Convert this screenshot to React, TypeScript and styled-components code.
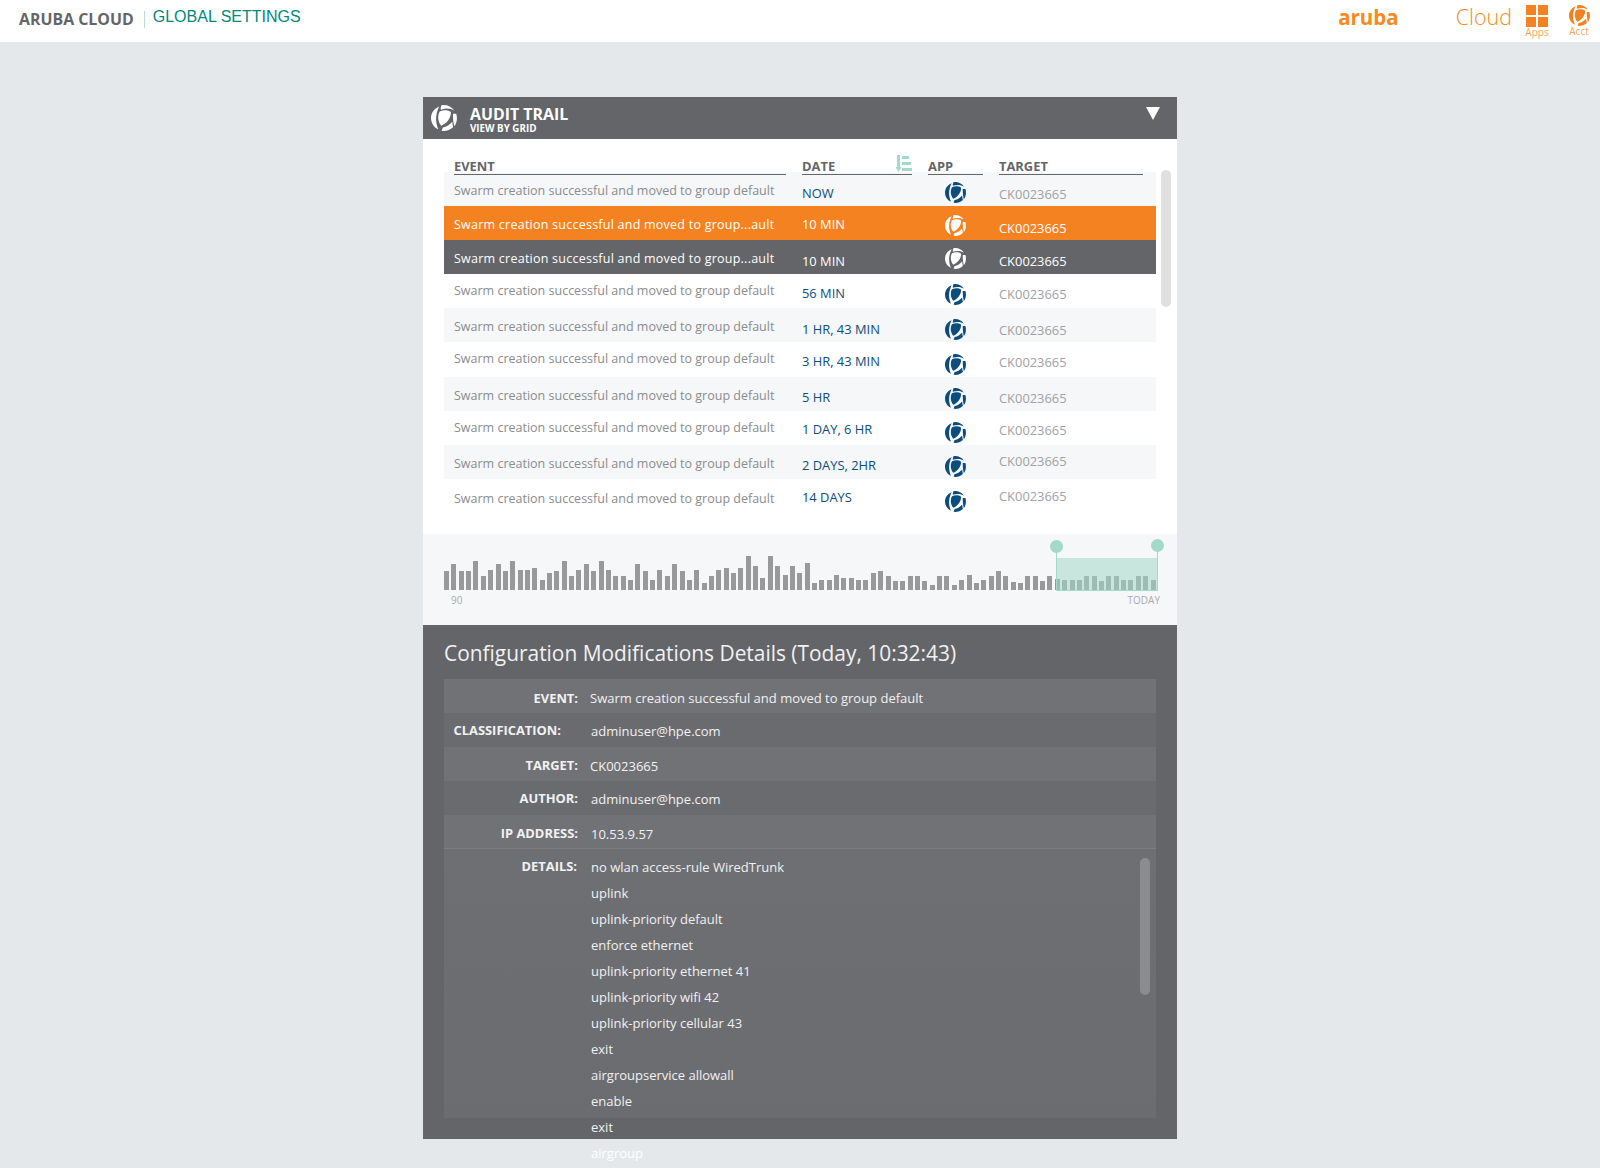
import React from 'react'
import styled, { createGlobalStyle } from 'styled-components'

const COLOR = {
  PAGE: '#e4e8eb',
  SLATE: '#646569',
  ORANGE: '#f58220',
  BLUE: '#0d4d7c',
  TEAL: '#a3d9c9',
}

const GlobalStyle = createGlobalStyle`
  html, body {
    margin: 0;
    background: ${COLOR.PAGE};
    font-family: "Open Sans", "Liberation Sans", sans-serif;
  }

  body, #root {
    min-height: 100vh;
  }
`

type RowKind = 'plain' | 'shade' | 'orange' | 'dark'

// top offsets inside a row: event, date, icon, target
const rows: { date: string; kind: RowKind; text?: string; tops: number[] }[] = [
  { date: 'NOW', kind: 'shade', tops: [10, 12, 10, 13] },
  { date: '10 MIN', kind: 'orange', text: 'Swarm creation successful and moved to group...ault', tops: [10, 9, 9, 13] },
  { date: '10 MIN', kind: 'dark', text: 'Swarm creation successful and moved to group...ault', tops: [10, 12, 8, 12] },
  { date: '56 MIN', kind: 'plain', tops: [8, 10, 10, 11] },
  { date: '1 HR, 43 MIN', kind: 'shade', tops: [10, 12, 11, 13] },
  { date: '3 HR, 43 MIN', kind: 'plain', tops: [8, 10, 12, 11] },
  { date: '5 HR', kind: 'shade', tops: [10, 11, 11, 12] },
  { date: '1 DAY, 6 HR', kind: 'plain', tops: [8, 9, 11, 10] },
  { date: '2 DAYS, 2HR', kind: 'shade', tops: [10, 11, 11, 7] },
  { date: '14 DAYS', kind: 'plain', tops: [11, 9, 12, 8] },
]

const bars = [
  19, 26, 19, 19, 29, 14, 20, 26, 19, 29, 20, 20, 22, 10, 17, 19, 29, 14, 20, 26, 19, 29, 20, 14, 14, 10, 26, 19, 10,
  20, 14, 26, 19, 10, 20, 7, 14, 20, 22, 17, 22, 34, 24, 12, 34, 24, 15, 24, 17, 27, 7, 10, 10, 15, 12, 12, 10, 10, 17,
  19, 14, 9, 9, 14, 14, 9, 5, 14, 14, 5, 10, 15, 7, 10, 14, 19, 14, 8, 7, 14, 14, 9, 14, 11, 10, 10, 10, 14, 14, 9, 14,
  14, 10, 10, 14, 14, 10,
]

const details = [
  { label: 'EVENT:', value: 'Swarm creation successful and moved to group default', labelTop: 10, valueTop: 10, inset: true },
  { label: 'CLASSIFICATION:', value: 'adminuser@hpe.com', labelTop: 8, valueTop: 9, shift: true },
  { label: 'TARGET:', value: 'CK0023665', labelTop: 9, valueTop: 10, inset: true },
  { label: 'AUTHOR:', value: 'adminuser@hpe.com', labelTop: 8, valueTop: 9 },
  { label: 'IP ADDRESS:', value: '10.53.9.57', labelTop: 9, valueTop: 10 },
]

const detailLines = [
  'no wlan access-rule WiredTrunk',
  'uplink',
  'uplink-priority default',
  'enforce ethernet',
  'uplink-priority ethernet 41',
  'uplink-priority wifi 42',
  'uplink-priority cellular 43',
  'exit',
  'airgroupservice allowall',
  'enable',
  'exit',
  'airgroup',
]

// the cloud ball, split into a left crescent, a top band, a centre lens, a right band and a bottom band
const Logo = ({ size, className }: { size: number; className?: string }) => (
  <svg width={size} height={size} viewBox="0 0 24 24" fill="currentColor" className={className}>
    <path d="M7.6 1.3C2.8 3.2 0 7.4 0 12c0 4.6 2.6 8.6 6.8 10.6C5 18.4 4.4 14.4 4.8 10.6 5.2 7 6.2 4 7.6 1.3z" />
    <path d="M9.6.3c4.6-.8 9.2 1 12 5-3.2-2-7.2-2.6-11.8-1.2-.8.2-1.2-.2-.9-1z" />
    <path d="M8 6c3.4-1.6 7.6-1.6 10.4.5.2 4.8-3.4 10.4-9 12.6C6.2 15.4 5.8 10 8 6z" />
    <path d="M20.3 8h3c1.2 4 .7 8.4-1.8 11.6-1-4-1.3-7.8-1.2-11.6z" />
    <path d="M11 20.7c3.4-.6 6.4-2.6 8.6-5.2.2 1.8.5 3.4.8 5-2.8 2.7-7 4-10.6 3.3z" />
  </svg>
)

const TopBar = styled.header`
  display: flex;
  align-items: flex-start;
  height: 42px;
  padding: 0 9px 0 19px;
  box-sizing: border-box;
  background: #fff;
`

const Brand = styled.div`
  margin-top: 9px;
  font-size: 15.9px;
  line-height: 21px;
  font-weight: 700;
  color: ${COLOR.SLATE};
`

const Divider = styled.div`
  width: 1px;
  height: 17px;
  margin: 11px 8px 0 10px;
  background: #b9dcd3;
`

const Section = styled.div`
  margin-top: 7px;
  font-family: 'Liberation Sans', sans-serif;
  font-size: 16px;
  line-height: 20px;
  color: #01897a;
`

const Spacer = styled.div`
  flex: 1;
`

const Wordmark = styled.div`
  margin: 4px 57px 0 0;
  font-size: 20.5px;
  line-height: 26px;
  font-weight: 700;
  color: #f78a1f;
`

const CloudMark = styled.div`
  margin: 3px 13px 0 0;
  font-size: 21.5px;
  line-height: 28px;
  font-weight: 300;
  color: #f78a1f;
`

const TopAction = styled.div<{ $gap: number }>`
  display: flex;
  flex-direction: column;
  align-items: center;
  width: 24px;
  margin: 5px ${({ $gap }) => $gap}px 0 0;
  font-size: 10px;
  line-height: 11px;
  color: #f7a45a;
`

const AppsGrid = styled.div`
  display: grid;
  grid-template-columns: 10px 10px;
  gap: 1.5px;
`

const AppsCell = styled.div`
  height: 10px;
  background: #f58220;
`

const AcctIcon = styled(Logo)`
  color: #f58220;
`

const Panel = styled.main`
  width: 754px;
  height: 1042px;
  margin: 55px auto 0;
  background: #fff;
`

const PanelHead = styled.div`
  display: flex;
  align-items: center;
  height: 42px;
  padding: 0 17px 0 8px;
  background: ${COLOR.SLATE};
  color: #fff;
`

const HeadIcon = styled(Logo)`
  color: #fff;
  margin-right: 13px;
`

const HeadTitles = styled.div`
  flex: 1;
  padding-top: 3px;
`

const HeadTitle = styled.div`
  font-size: 15.9px;
  line-height: 16px;
  font-weight: 700;
`

const HeadSub = styled.div`
  margin-top: 1px;
  font-size: 9.8px;
  line-height: 11px;
  font-weight: 700;
`

const Caret = styled.div`
  width: 0;
  height: 0;
  border-left: 7px solid transparent;
  border-right: 7px solid transparent;
  border-top: 13px solid #fff;
  margin-bottom: 9px;
`

const GridArea = styled.section`
  position: relative;
  height: 395px;
  padding: 0 21px;
`

const Columns = styled.div`
  position: relative;
  z-index: 1;
  display: grid;
  grid-template-columns: 332px 110px 55px 144px;
  column-gap: 16px;
  height: 36px;
  padding-left: 10px;
  margin-bottom: -3px;
`

const Column = styled.div`
  position: relative;
  align-self: end;
  height: 18px;
  border-bottom: 1px solid ${COLOR.SLATE};
  font-size: 12.9px;
  line-height: 21px;
  font-weight: 700;
  color: ${COLOR.SLATE};
`

const SortIcon = styled.svg`
  position: absolute;
  right: 0;
  bottom: 2px;
`

const List = styled.div`
  display: flex;
  flex-direction: column;
`

const rowBackground: Record<RowKind, string> = {
  plain: '#fff',
  shade: '#f6f7f9',
  orange: COLOR.ORANGE,
  dark: COLOR.SLATE,
}

const Row = styled.div<{ $kind: RowKind }>`
  display: grid;
  grid-template-columns: 332px 110px 55px 144px;
  column-gap: 16px;
  height: 34.1px;
  padding-left: 10px;
  background: ${({ $kind }) => rowBackground[$kind]};
`

const Cell = styled.div<{ $top: number; $tone: string; $selected: boolean; $size: number }>`
  margin-top: ${({ $top }) => $top}px;
  font-size: ${({ $size }) => $size}px;
  line-height: 18px;
  white-space: nowrap;
  color: ${({ $selected, $tone }) => ($selected ? '#fff' : $tone)};
`

const EventCell = styled(Cell)`
  letter-spacing: ${({ $selected }) => ($selected ? 0.24 : 0)}px;
`

const IconCell = styled.div<{ $top: number; $selected: boolean }>`
  display: flex;
  justify-content: center;
  margin-top: ${({ $top }) => $top}px;
  color: ${({ $selected }) => ($selected ? '#fff' : COLOR.BLUE)};
`

const ListScroll = styled.div`
  position: absolute;
  top: 31px;
  right: 6px;
  width: 10px;
  height: 137px;
  border-radius: 5px;
  background: #e0e0e0;
`

const Timeline = styled.section`
  position: relative;
  height: 91px;
  box-sizing: border-box;
  padding: 0 21px;
  background: #f6f7f9;
`

const Bars = styled.div`
  display: flex;
  align-items: flex-end;
  gap: 2.37px;
  height: 56px;
`

const Bar = styled.div`
  flex: 0 0 5px;
  background: #999;
`

const Axis = styled.div`
  display: flex;
  justify-content: space-between;
  margin-right: -4px;
  padding: 4px 0 0 7px;
  font-size: 10px;
  line-height: 13px;
  color: #aaa;
`

const Range = styled.div`
  position: absolute;
  top: 24px;
  left: 633px;
  width: 100px;
  height: 32px;
  border: solid ${COLOR.TEAL};
  border-width: 0 1px 1.5px;
  background: rgba(163, 217, 201, 0.55);
`

const Handle = styled.div<{ $side: 'left' | 'right'; $lift: number }>`
  position: absolute;
  top: ${({ $lift }) => $lift}px;
  ${({ $side }) => $side}: -7px;
  width: 13px;
  height: 13px;
  border-radius: 50%;
  background: ${COLOR.TEAL};

  &::after {
    content: '';
    position: absolute;
    top: 12px;
    left: 6px;
    width: 1px;
    height: ${({ $lift }) => -$lift - 12}px;
    background: ${COLOR.TEAL};
  }
`

const Details = styled.section`
  height: 514px;
  box-sizing: border-box;
  padding: 0 21px;
  background: ${COLOR.SLATE};
  color: #f1f1f2;
`

const DetailsTitle = styled.h2`
  margin: 0;
  height: 54px;
  font-size: 20.9px;
  line-height: 56px;
  font-weight: 400;
  white-space: nowrap;
`

const InfoRow = styled.div<{ $light: boolean }>`
  display: grid;
  grid-template-columns: 134px 1fr;
  column-gap: 13px;
  height: 34px;
  background: ${({ $light }) => ($light ? '#717276' : '#6a6b6f')};
`

const InfoLabel = styled.div<{ $shift?: boolean; $top: number }>`
  margin-top: ${({ $top }) => $top}px;
  padding-right: ${({ $shift }) => ($shift ? 17 : 0)}px;
  text-align: right;
  font-size: 12.9px;
  line-height: 18px;
  font-weight: 700;
`

const InfoValue = styled.div<{ $top: number; $inset?: boolean }>`
  margin: ${({ $top }) => $top}px 0 0 ${({ $inset }) => ($inset ? -1 : 0)}px;
  font-size: 13px;
  line-height: 18px;
`

const DetailBody = styled.div`
  position: relative;
  display: grid;
  grid-template-columns: 134px 1fr;
  column-gap: 13px;
  height: 270px;
  margin-top: -1px;
  border-top: 1px solid #7b7c80;
  box-sizing: border-box;
  background: linear-gradient(#6e6f73, #6b6c70);
`

const DetailLabel = styled(InfoLabel)`
  padding-right: 1px;
`

const DetailLines = styled.div`
  padding-top: 5px;
`

// the last command runs out of the panel onto the page, as in the design
const DetailLine = styled.div<{ $overflow?: boolean }>`
  font-size: 13px;
  line-height: 26px;
  color: ${({ $overflow }) => ($overflow ? '#fff' : 'inherit')};
`

const DetailScroll = styled.div`
  position: absolute;
  top: 9px;
  right: 6px;
  width: 10px;
  height: 137px;
  border-radius: 5px;
  background: #8b8c90;
`

export default function App() {
  return (
    <>
      <GlobalStyle />
      <TopBar>
        <Brand>ARUBA CLOUD</Brand>
        <Divider />
        <Section>GLOBAL SETTINGS</Section>
        <Spacer />
        <Wordmark>aruba</Wordmark>
        <CloudMark>Cloud</CloudMark>
        <TopAction $gap={18}>
          <AppsGrid>
            <AppsCell />
            <AppsCell />
            <AppsCell />
            <AppsCell />
          </AppsGrid>
          Apps
        </TopAction>
        <TopAction $gap={0}>
          <AcctIcon size={21} />
          Acct
        </TopAction>
      </TopBar>
      <Panel>
        <PanelHead>
          <HeadIcon size={26} />
          <HeadTitles>
            <HeadTitle>AUDIT TRAIL</HeadTitle>
            <HeadSub>VIEW BY GRID</HeadSub>
          </HeadTitles>
          <Caret />
        </PanelHead>
        <GridArea>
          <Columns>
            <Column>EVENT</Column>
            <Column>
              DATE
              <SortIcon width="16" height="17" viewBox="0 0 16 17" fill="#a3d9c9">
                <path d="M1 0h3v12h1.6L2.5 17-.6 12H1z" />
                <rect x="6" y="1" width="7" height="3" />
                <rect x="6" y="7" width="9" height="3" />
                <rect x="6" y="13" width="10" height="3" />
              </SortIcon>
            </Column>
            <Column>APP</Column>
            <Column>TARGET</Column>
          </Columns>
          <List>
            {rows.map((row, i) => {
              const selected = row.kind === 'orange' || row.kind === 'dark'
              return (
                <Row key={i} $kind={row.kind}>
                  <EventCell $top={row.tops[0]} $tone="#8a8c8e" $selected={selected} $size={12.5}>
                    {row.text ?? 'Swarm creation successful and moved to group default'}
                  </EventCell>
                  <Cell $top={row.tops[1]} $tone={COLOR.BLUE} $selected={selected} $size={12.9}>
                    {row.date}
                  </Cell>
                  <IconCell $top={row.tops[2]} $selected={selected}>
                    <Logo size={21} />
                  </IconCell>
                  <Cell $top={row.tops[3]} $tone="#a0a2a4" $selected={selected} $size={12.9}>
                    CK0023665
                  </Cell>
                </Row>
              )
            })}
          </List>
          <ListScroll />
        </GridArea>
        <Timeline>
          <Bars>
            {bars.map((h, i) => (
              <Bar key={i} style={{ height: h }} />
            ))}
          </Bars>
          <Axis>
            <span>90</span>
            <span>TODAY</span>
          </Axis>
          <Range>
            <Handle $side="left" $lift={-18} />
            <Handle $side="right" $lift={-19} />
          </Range>
        </Timeline>
        <Details>
          <DetailsTitle>Configuration Modifications Details (Today, 10:32:43)</DetailsTitle>
          {details.map((d, i) => (
            <InfoRow key={d.label} $light={i % 2 === 0}>
              <InfoLabel $shift={d.shift} $top={d.labelTop}>
                {d.label}
              </InfoLabel>
              <InfoValue $top={d.valueTop} $inset={d.inset}>
                {d.value}
              </InfoValue>
            </InfoRow>
          ))}
          <DetailBody>
            <DetailLabel $top={8}>DETAILS:</DetailLabel>
            <DetailLines>
              {detailLines.map((line, i) => (
                <DetailLine key={i} $overflow={i === detailLines.length - 1}>
                  {line}
                </DetailLine>
              ))}
            </DetailLines>
            <DetailScroll />
          </DetailBody>
        </Details>
      </Panel>
    </>
  )
}
